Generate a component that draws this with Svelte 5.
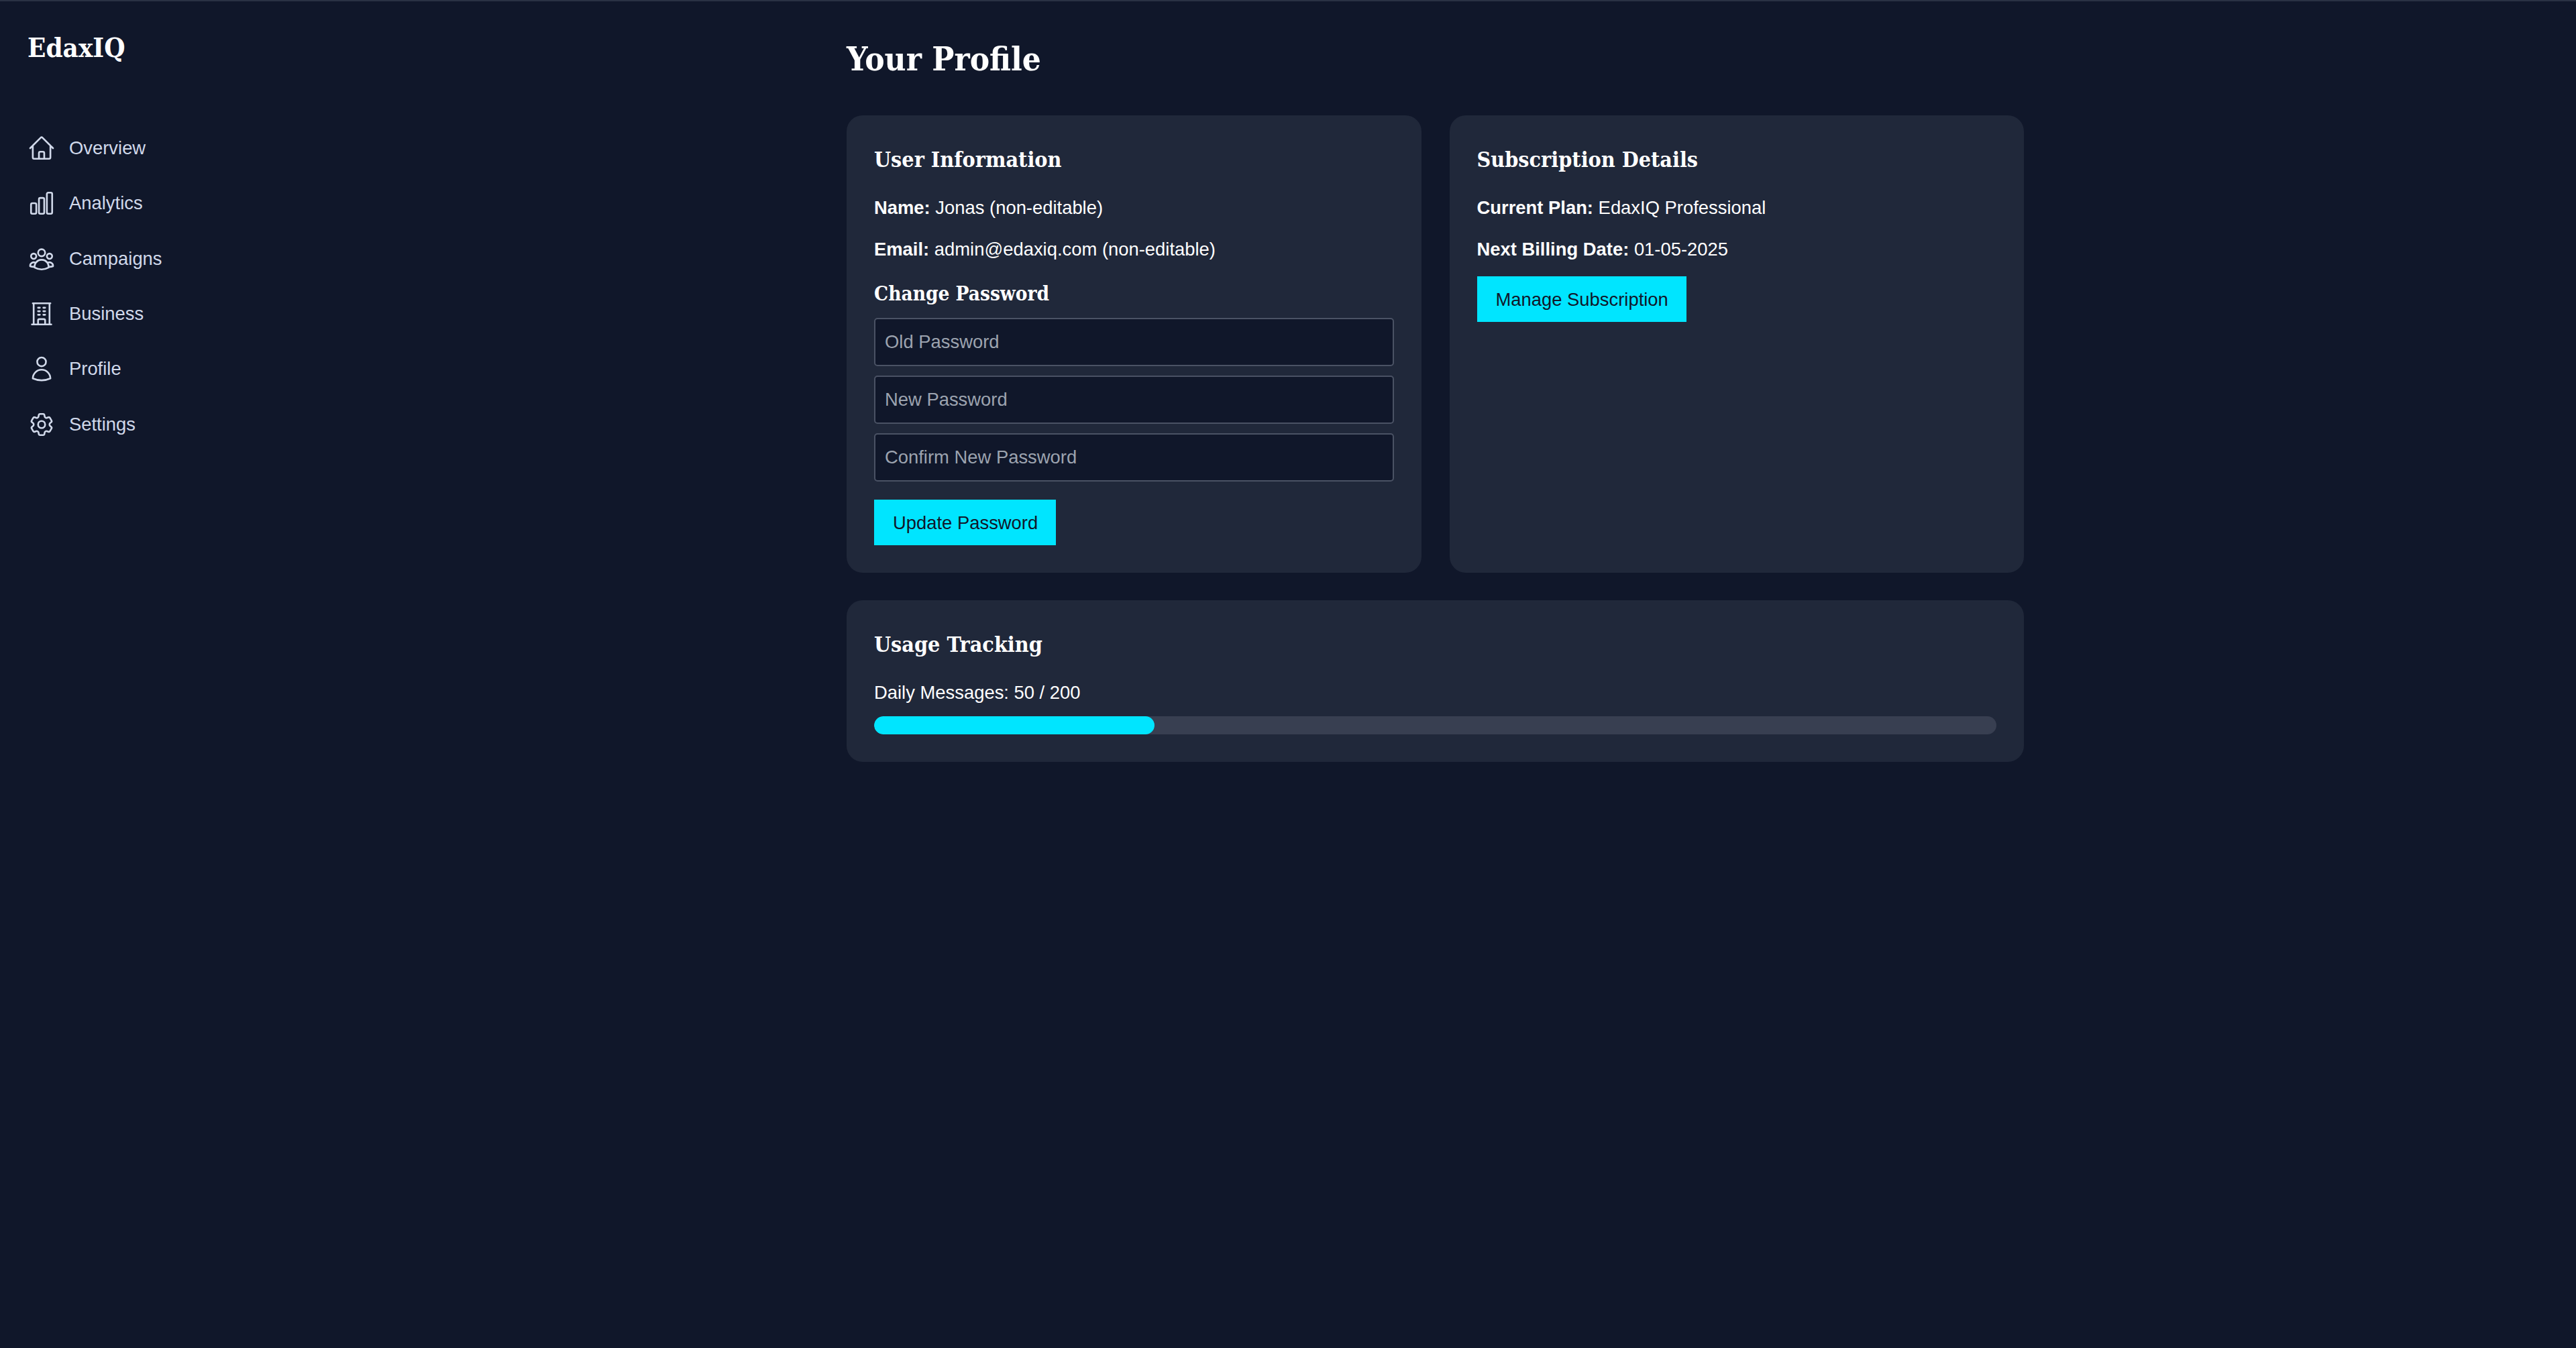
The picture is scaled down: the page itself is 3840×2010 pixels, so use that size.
<script>
  const icons = {
    home: 'm2.25 12 8.954-8.955c.44-.439 1.152-.439 1.591 0L21.75 12M4.5 9.75v10.125c0 .621.504 1.125 1.125 1.125H9.75v-4.875c0-.621.504-1.125 1.125-1.125h2.25c.621 0 1.125.504 1.125 1.125V21h4.125c.621 0 1.125-.504 1.125-1.125V9.75M8.25 21h8.25',
    chart: 'M3 13.125C3 12.504 3.504 12 4.125 12h2.25c.621 0 1.125.504 1.125 1.125v6.75C7.5 20.496 6.996 21 6.375 21h-2.25A1.125 1.125 0 0 1 3 19.875v-6.75ZM9.75 8.625c0-.621.504-1.125 1.125-1.125h2.25c.621 0 1.125.504 1.125 1.125v11.25c0 .621-.504 1.125-1.125 1.125h-2.25a1.125 1.125 0 0 1-1.125-1.125V8.625ZM16.5 4.125c0-.621.504-1.125 1.125-1.125h2.25C20.496 3 21 3.504 21 4.125v15.75c0 .621-.504 1.125-1.125 1.125h-2.25a1.125 1.125 0 0 1-1.125-1.125V4.125Z',
    group: 'M18 18.72a9.094 9.094 0 0 0 3.741-.479 3 3 0 0 0-4.682-2.72m.94 3.198.001.031c0 .225-.012.447-.037.666A11.944 11.944 0 0 1 12 21c-2.17 0-4.207-.576-5.963-1.584A6.062 6.062 0 0 1 6 18.719m12 0a5.971 5.971 0 0 0-.941-3.197m0 0A5.995 5.995 0 0 0 12 12.75a5.995 5.995 0 0 0-5.058 2.772m0 0a3 3 0 0 0-4.681 2.72 8.986 8.986 0 0 0 3.74.477m.94-3.197a5.971 5.971 0 0 0-.94 3.197M15 6.75a3 3 0 1 1-6 0 3 3 0 0 1 6 0Zm6 3a2.25 2.25 0 1 1-4.5 0 2.25 2.25 0 0 1 4.5 0Zm-13.5 0a2.25 2.25 0 1 1-4.5 0 2.25 2.25 0 0 1 4.5 0Z',
    building: 'M3.75 21h16.5M4.5 3h15M5.25 3v18m13.5-18v18M9 6.75h1.5m-1.5 3h1.5m-1.5 3h1.5m3-6H15m-1.5 3H15m-1.5 3H15M9 21v-3.375c0-.621.504-1.125 1.125-1.125h3.75c.621 0 1.125.504 1.125 1.125V21',
    user: 'M15.75 6a3.75 3.75 0 1 1-7.5 0 3.75 3.75 0 0 1 7.5 0ZM4.501 20.118a7.5 7.5 0 0 1 14.998 0A17.933 17.933 0 0 1 12 21.75c-2.676 0-5.216-.584-7.499-1.632Z',
    cog: 'M9.594 3.94c.09-.542.56-.94 1.11-.94h2.593c.55 0 1.02.398 1.11.94l.213 1.281c.063.374.313.686.645.87.074.04.147.083.22.127.325.196.72.257 1.075.124l1.217-.456a1.125 1.125 0 0 1 1.37.49l1.296 2.247a1.125 1.125 0 0 1-.26 1.431l-1.003.827c-.293.241-.438.613-.43.992a7.723 7.723 0 0 1 0 .255c-.008.378.137.75.43.991l1.004.827c.424.35.534.955.26 1.43l-1.298 2.247a1.125 1.125 0 0 1-1.369.491l-1.217-.456c-.355-.133-.75-.072-1.076.124a6.47 6.47 0 0 1-.22.128c-.331.183-.581.495-.644.869l-.213 1.281c-.09.543-.56.94-1.11.94h-2.594c-.55 0-1.019-.398-1.11-.94l-.213-1.281c-.062-.374-.312-.686-.644-.87a6.52 6.52 0 0 1-.22-.127c-.325-.196-.72-.257-1.076-.124l-1.217.456a1.125 1.125 0 0 1-1.369-.49l-1.297-2.247a1.125 1.125 0 0 1 .26-1.431l1.004-.827c.292-.24.437-.613.43-.991a6.932 6.932 0 0 1 0-.255c.007-.38-.138-.751-.43-.992l-1.004-.827a1.125 1.125 0 0 1-.26-1.43l1.297-2.247a1.125 1.125 0 0 1 1.37-.491l1.216.456c.356.133.751.072 1.076-.124.072-.044.146-.086.22-.128.332-.183.582-.495.644-.869l.214-1.28ZM15 12a3 3 0 1 1-6 0 3 3 0 0 1 6 0Z',
  };

  const navItems = [
    { label: 'Overview', icon: icons.home },
    { label: 'Analytics', icon: icons.chart },
    { label: 'Campaigns', icon: icons.group },
    { label: 'Business', icon: icons.building },
    { label: 'Profile', icon: icons.user },
    { label: 'Settings', icon: icons.cog },
  ];

  const used = 50;
  const limit = 200;
</script>

<div class="page">
  <aside class="sidebar">
    <div class="logo">EdaxIQ</div>
    <nav>
      {#each navItems as item}
        <a class="nav-item" href="#{item.label.toLowerCase()}">
          <svg viewBox="0 0 24 24" fill="none" stroke="currentColor" stroke-width="1.5" stroke-linecap="round" stroke-linejoin="round">
            <path d={item.icon} />
          </svg>
          <span>{item.label}</span>
        </a>
      {/each}
    </nav>
  </aside>

  <main>
    <div class="content">
      <h1>Your Profile</h1>
      <div class="columns">
        <section class="card">
          <h2>User Information</h2>
          <p class="first"><strong>Name:</strong> Jonas (non-editable)</p>
          <p><strong>Email:</strong> admin@edaxiq.com (non-editable)</p>
          <h3>Change Password</h3>
          <form class="password-form" onsubmit={(e) => e.preventDefault()}>
            <input type="password" placeholder="Old Password" />
            <input type="password" placeholder="New Password" />
            <input type="password" placeholder="Confirm New Password" />
            <button type="submit" class="update">Update Password</button>
          </form>
        </section>
        <section class="card">
          <h2>Subscription Details</h2>
          <p class="first"><strong>Current Plan:</strong> EdaxIQ Professional</p>
          <p><strong>Next Billing Date:</strong> 01-05-2025</p>
          <button type="button" class="manage">Manage Subscription</button>
        </section>
      </div>
      <section class="card usage">
        <h2>Usage Tracking</h2>
        <p class="usage-label">Daily Messages: {used} / {limit}</p>
        <div class="track">
          <div class="fill" style="width: {(used / limit) * 100}%"></div>
        </div>
      </section>
    </div>
  </main>
</div>

<style>
  :global(body) {
    margin: 0;
    background: #10172a;
  }
  .page {
    display: flex;
    min-height: 2008px;
    border-top: 2px solid #2a3244;
    background: #10172a;
    color: #fff;
    font-family: "Liberation Sans", Arial, sans-serif;
    font-size: 27.4px;
  }
  .sidebar {
    width: 439px;
    flex-shrink: 0;
    box-sizing: border-box;
    padding: 44px 0 0 41px;
  }
  .logo {
    font-family: "DejaVu Serif Condensed", "DejaVu Serif", serif;
    font-stretch: condensed;
    font-weight: 700;
    font-size: 40px;
    line-height: 50px;
    margin-bottom: 84px;
  }
  nav {
    display: flex;
    flex-direction: column;
  }
  .nav-item {
    display: flex;
    align-items: center;
    gap: 20px;
    height: 82.3px;
    color: #d1d9ea;
    text-decoration: none;
  }
  .nav-item svg {
    width: 42px;
    height: 42px;
    flex-shrink: 0;
  }
  main {
    flex: 1;
  }
  .content {
    width: 1755px;
    margin: 0 auto;
  }
  h1, h2, h3 {
    font-family: "DejaVu Serif Condensed", "DejaVu Serif", serif;
    font-stretch: condensed;
    font-weight: 700;
    margin: 0;
  }
  h1 {
    font-size: 49px;
    line-height: 60px;
    margin-top: 56px;
    margin-bottom: 54px;
  }
  h2 {
    font-size: 32px;
    line-height: 48px;
    padding-top: 1px;
    margin-bottom: -1px;
  }
  h3 {
    font-size: 29.5px;
    line-height: 42px;
    margin-top: 25px;
    margin-bottom: 15px;
  }
  .columns {
    display: grid;
    grid-template-columns: 1fr 1fr;
    gap: 42px;
  }
  .card {
    background: #20283a;
    border-radius: 24px;
    padding: 41px;
  }
  p {
    margin: 22px 0 0;
    line-height: 40px;
  }
  p.first {
    margin-top: 29px;
  }
  strong {
    font-weight: 700;
  }
  .password-form {
    display: flex;
    flex-direction: column;
    align-items: flex-start;
    gap: 14px;
  }
  input {
    box-sizing: border-box;
    width: 100%;
    height: 72px;
    padding: 0 14px;
    background: #10172a;
    border: 2px solid #4a5264;
    border-radius: 5px;
    color: #fff;
    font: inherit;
    outline: none;
  }
  input::placeholder {
    color: #9ca3af;
    opacity: 1;
  }
  button {
    height: 68px;
    padding: 1px 27px 0 28px;
    background: #00e5ff;
    border: 0;
    border-radius: 0;
    color: #10172a;
    font: inherit;
    cursor: pointer;
  }
  .update {
    margin-top: 13px;
  }
  .manage {
    display: block;
    margin-top: 20px;
  }
  .usage {
    margin-top: 41px;
  }
  .usage-label {
    margin-top: 29px;
  }
  .track {
    height: 27px;
    margin-top: 15px;
    background: #383f51;
    border-radius: 14px;
    overflow: hidden;
  }
  .fill {
    height: 100%;
    background: #00e5ff;
    border-radius: 14px;
  }
</style>
